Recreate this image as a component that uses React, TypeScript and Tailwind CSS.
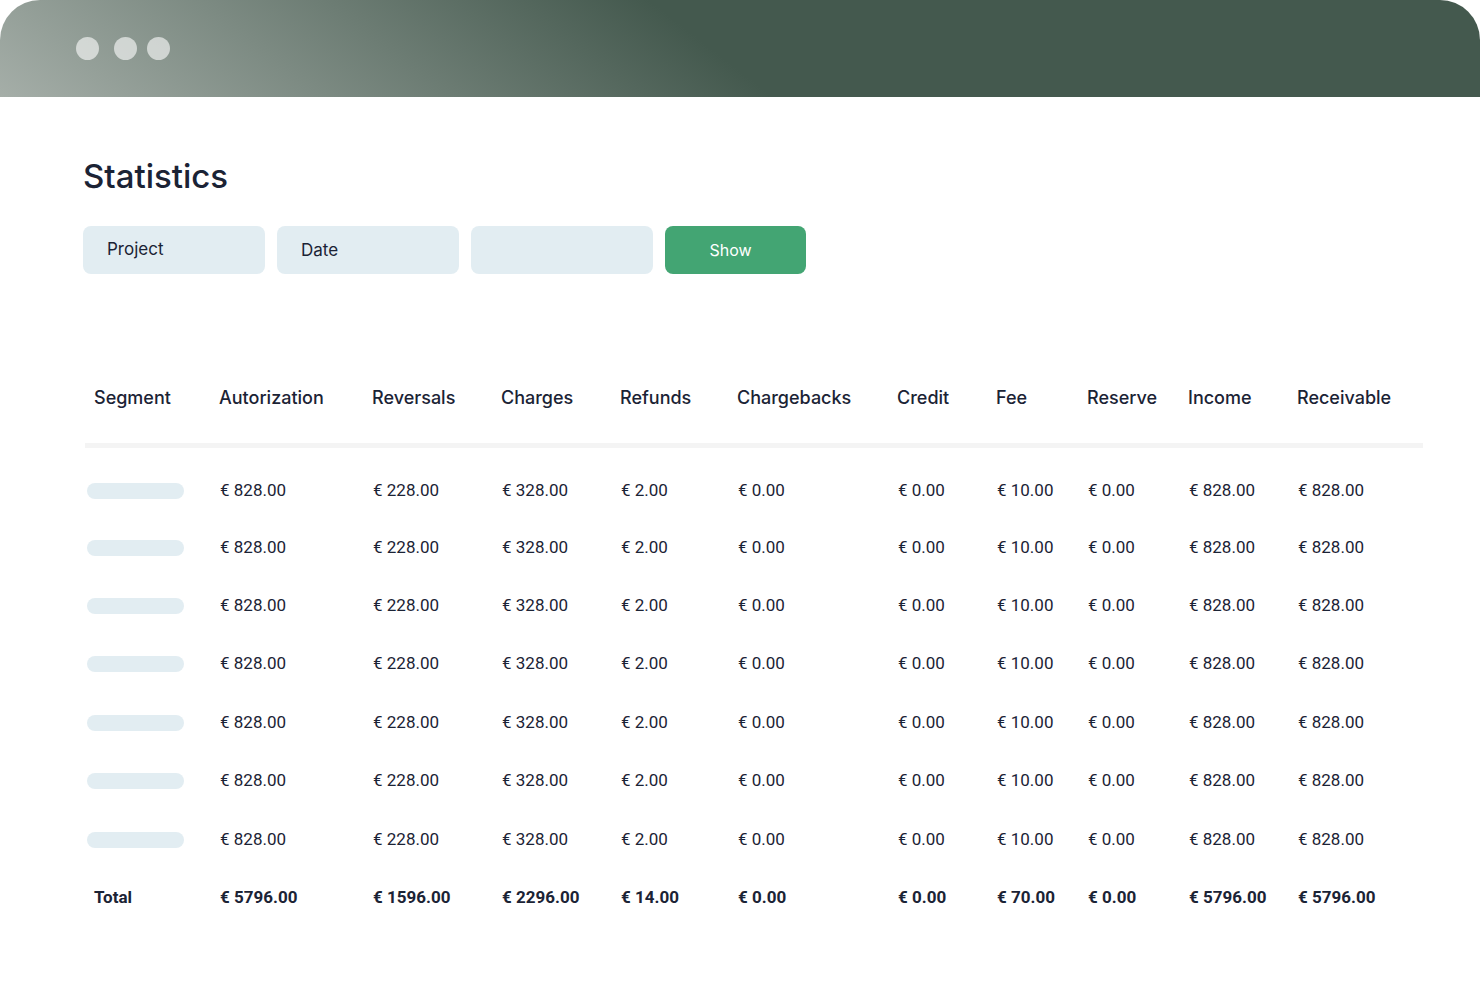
interface Column {
  label: string;
  width: number;
  value: string;
  total: string;
}

// Widths are relative, they are turned into shares of the table below.
const columns: Column[] = [
  { label: 'Segment',      width: 134, value: '',         total: 'Total' },
  { label: 'Autorization', width: 153, value: '€ 828.00', total: '€ 5796.00' },
  { label: 'Reversals',    width: 129, value: '€ 228.00', total: '€ 1596.00' },
  { label: 'Charges',      width: 119, value: '€ 328.00', total: '€ 2296.00' },
  { label: 'Refunds',      width: 117, value: '€ 2.00',   total: '€ 14.00' },
  { label: 'Chargebacks',  width: 160, value: '€ 0.00',   total: '€ 0.00' },
  { label: 'Credit',       width: 99,  value: '€ 0.00',   total: '€ 0.00' },
  { label: 'Fee',          width: 91,  value: '€ 10.00',  total: '€ 70.00' },
  { label: 'Reserve',      width: 101, value: '€ 0.00',   total: '€ 0.00' },
  { label: 'Income',       width: 109, value: '€ 828.00', total: '€ 5796.00' },
  { label: 'Receivable',   width: 126, value: '€ 828.00', total: '€ 5796.00' },
];

const rowHeights = [
  'h-[57px]',
  'h-[57px]',
  'h-[59px]',
  'h-[58px]',
  'h-[59px]',
  'h-[58px]',
  'h-[59px]',
];
const totalWidth = columns.reduce((sum, column) => sum + column.width, 0);

const fieldClass =
  'h-12 w-[182px] appearance-none rounded-lg bg-[#e2edf2] px-6 text-[17px] text-[#1b2335] placeholder:text-[#1b2335] placeholder:opacity-100';

function WindowBar() {
  return (
    <header className="flex h-[97px] items-center gap-2.5 rounded-t-[40px] bg-[linear-gradient(38deg,#a5aea8_0px,#44594e_476px)] pl-[76px]">
      <span className="mr-[5px] size-[23px] rounded-full bg-white/60" />
      <span className="size-[23px] rounded-full bg-white/60" />
      <span className="size-[23px] rounded-full bg-white/60" />
    </header>
  );
}

function Filters() {
  return (
    <form
      className="mt-[30px] flex flex-wrap gap-3"
      onSubmit={(event) => event.preventDefault()}
    >
      <select aria-label="Project" className={fieldClass}>
        <option>Project</option>
      </select>
      <input aria-label="Date" placeholder="Date" className={fieldClass} />
      <input aria-label="Filter" className={fieldClass} />
      <button
        type="submit"
        className="h-12 w-[141px] rounded-lg bg-[#43a573] pr-2.5 text-base text-white"
      >
        Show
      </button>
    </form>
  );
}

function StatisticsTable() {
  return (
    <table className="w-full table-fixed border-separate border-spacing-0 text-left whitespace-nowrap">
      <colgroup>
        {columns.map((column) => (
          <col
            key={column.label}
            style={{ width: `${(column.width / totalWidth) * 100}%` }}
          />
        ))}
      </colgroup>
      <thead>
        <tr className="h-[97px]">
          {columns.map((column) => (
            <th
              key={column.label}
              scope="col"
              className="border-b-[5px] border-[#f4f4f4] p-0 pt-0.5 text-lg font-medium first:pl-[9px]"
            >
              {column.label}
            </th>
          ))}
        </tr>
      </thead>
      <tbody className="font-[Roboto,sans-serif] text-[17px] before:block before:h-3.5 before:content-['']">
        {rowHeights.map((height, index) => (
          <tr key={index} className={height}>
            {columns.map((column) => (
              <td key={column.label} className="p-0 pl-px first:pl-0.5">
                {column.value || (
                  <div className="h-4 w-[97px] rounded-full bg-[#e2edf2]" />
                )}
              </td>
            ))}
          </tr>
        ))}
      </tbody>
      <tfoot className="font-[Roboto,sans-serif] text-[17px]">
        <tr className="h-[58px]">
          {columns.map((column) => (
            <td
              key={column.label}
              className="p-0 pl-px font-bold first:pl-[9px]"
            >
              {column.total}
            </td>
          ))}
        </tr>
      </tfoot>
    </table>
  );
}

export default function App() {
  return (
    <div className="min-h-screen bg-white font-[Inter,sans-serif] text-[#1b2335]">
      <WindowBar />
      <main className="pt-[59px] pr-[57px] pb-14 pl-[83px]">
        <h1 className="text-[33px] leading-10 font-medium">Statistics</h1>
        <Filters />
        <section className="mt-[77px] pl-0.5">
          <StatisticsTable />
        </section>
      </main>
    </div>
  );
}
